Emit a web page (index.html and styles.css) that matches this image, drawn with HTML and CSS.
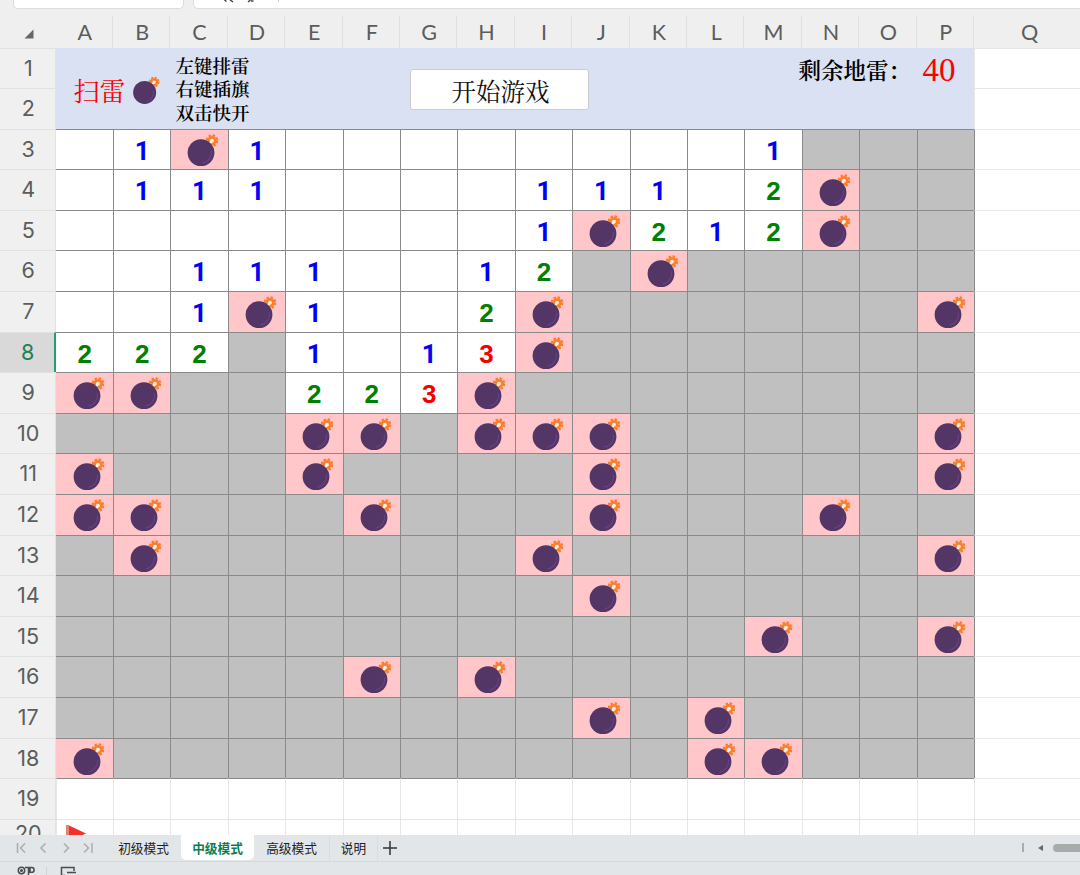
FILE: index.html
```html
<!DOCTYPE html>
<html lang="zh-CN">
<head>
    <meta charset="UTF-8">
    <meta name="viewport" content="width=device-width, initial-scale=1.0">
    <title>扫雷</title>
    <link rel="stylesheet" href="styles.css">
</head>
<body>
    <!-- Bomb symbol, shared by the banner and the board -->
    <svg class="symbols" aria-hidden="true">
        <symbol id="bomb" viewBox="0 0 57 40">
            <circle cx="42" cy="11.6" r="5.2" fill="none" stroke="#fb7c2e" stroke-width="2.2" stroke-dasharray="2.4 1.68"/>
            <circle cx="42" cy="11.6" r="3.3" fill="#fff0e6" stroke="#fb802e" stroke-width="2.8"/>
            <path d="M37.5 17L42 12" stroke="#fff0e0" stroke-width="2.6" stroke-linecap="round"/>
            <circle cx="31" cy="23.7" r="13.4" fill="#533566"/>
            <path d="M41.5 22A11 11 0 0 1 33 34" fill="none" stroke="#684080" stroke-width="1.3" stroke-linecap="round"/>
        </symbol>
    </svg>

    <div class="app">
        <!-- Formula bar -->
        <div class="formula-bar">
            <div class="name-box"></div>
            <div class="formula-box">
                <svg width="90" height="4" viewBox="0 0 90 4">
                    <path d="M30.5 0l2 1.5M36 0l3 2M54 2l2.5-2M57 1h2.5" fill="none" stroke="#444" stroke-width="1.5"/>
                    <path d="M84.5 0v2" stroke="#ccc"/>
                </svg>
            </div>
        </div>

        <!-- Column letters -->
        <div class="col-heads" id="col-heads">
            <div class="corner">
                <svg width="10" height="10" viewBox="0 0 10 10"><path d="M9.5 0.5V9.5H0.5Z" fill="#666"/></svg>
            </div>
        </div>

        <!-- Sheet -->
        <div class="sheet" id="sheet">
            <div class="row-head">1</div>
            <div class="banner">
                <div class="title">扫雷</div>
                <svg class="title-bomb" width="49" height="34.5"><use href="#bomb"/></svg>
                <div class="help">左键排雷<br>右键插旗<br>双击快开</div>
                <button class="start">开始游戏</button>
                <div class="remain">剩余地雷：</div>
                <div class="count">40</div>
            </div>
            <div class="blank"></div>
            <div class="row-head">2</div>
            <div class="blank"></div>
        </div>

        <!-- Sheet tabs -->
        <div class="tabs">
            <div class="tab-nav">
                <svg width="84" height="14" viewBox="0 0 84 14" fill="none" stroke="#a9adb0" stroke-width="1.5">
                    <path d="M4.5 2v10M12 2.5L7.5 7l4.5 4.5"/>
                    <path d="M32.5 2.5L28 7l4.5 4.5"/>
                    <path d="M51 2.5L55.5 7l-4.5 4.5"/>
                    <path d="M71 2.5L75.5 7l-4.5 4.5M79 2v10"/>
                </svg>
            </div>
            <div class="tab tab-first">初级模式</div>
            <div class="tab active">中级模式</div>
            <div class="tab tab-high">高级模式</div>
            <div class="tab tab-info">说明</div>
            <svg class="add" width="16" height="16" viewBox="0 0 16 16"><path d="M8 1v14M1 8h14" stroke="#333" stroke-width="1.5"/></svg>
            <div class="scroll">
                <span class="scroll-grip"></span>
                <svg width="5" height="6" viewBox="0 0 5 6"><path d="M5 0v6L0 3Z" fill="#666"/></svg>
                <span class="scroll-thumb"></span>
            </div>
        </div>

        <!-- Status bar -->
        <div class="status">
            <svg width="80" height="12" viewBox="0 0 80 12" fill="none" stroke="#4a4d50" stroke-width="1.5">
                <circle cx="11.5" cy="4.5" r="3.2"/>
                <circle cx="11.5" cy="4.5" r="0.8"/>
                <path d="M15 1.500h7.5M18.5 1.500v10M20 6.3V1.500h1.800q2.300 0 2.300 2.400t-2.300 2.400zM8 10h6"/>
                <path d="M36.5 1v11" stroke="#d0d3d5" stroke-width="1"/>
                <path d="M51.5 10V1.500h12.500V5M57 6.500h9M51 9.500h4"/>
            </svg>
        </div>
    </div>

    <script>
        // . open, # covered, * mine, digits are neighbour counts
        const board = [
            '.1*1........1###',
            '.111....111.2*##',
            '........1*212*##',
            '..111..12#*#####',
            '..1*1..2*######*',
            '222#1.13*#######',
            '**##223*########',
            '####**#***#####*',
            '*###*####*#####*',
            '**###*###*###*##',
            '#*######*######*',
            '#########*######',
            '############*##*',
            '#####*#*########',
            '#########*#*####',
            '*##########**###'
        ];
        const bomb = '<svg class="bomb"><use href="#bomb"/></svg>';
        const flag = '<svg class="flag" width="22" height="20" viewBox="0 0 22 20"><path d="M0 0h3v20H0z" fill="#e8836f"/><path d="M3 0.5L20 8.5L3 16Z" fill="#f4302c"/></svg>';

        const sheet = document.getElementById('sheet');
        const heads = document.getElementById('col-heads');

        function add(parent, className, html) {
            const el = document.createElement('div');
            el.className = className;
            el.innerHTML = html || '';
            parent.appendChild(el);
        }

        for (const letter of 'ABCDEFGHIJKLMNOPQ') {
            add(heads, 'col-head', letter);
        }

        board.forEach((line, i) => {
            const row = i + 3;
            add(sheet, row === 8 ? 'row-head selected' : 'row-head', row);
            for (const ch of line) {
                if (ch === '*') add(sheet, 'cell mine', bomb);
                else if (ch === '#') add(sheet, 'cell covered');
                else if (ch === '.') add(sheet, 'cell');
                else add(sheet, 'cell n' + ch, ch);
            }
            add(sheet, 'blank edge');
        });

        // Empty rows under the board
        for (const row of [19, 20]) {
            add(sheet, row === 20 ? 'row-head last' : 'row-head', row);
            for (let c = 0; c < 17; c++) {
                const under = row === 19 && c < 16;
                add(sheet, under ? 'blank under' : 'blank', row === 20 && c === 0 ? flag : '');
            }
        }
    </script>
</body>
</html>
```
FILE: styles.css
```css
* {
    box-sizing: border-box;
}

body {
    margin: 0;
    background: #fff;
    font-family: "Noto Sans CJK SC", sans-serif;
    color: #222;
    overflow: hidden;
}

.symbols {
    display: none;
}

.app {
    display: flex;
    flex-direction: column;
    width: 1080px;
    height: 875px;
    overflow: hidden;
}

/* Formula bar */
.formula-bar {
    display: flex;
    gap: 9px;
    flex: none;
    height: 15.5px;
    padding-left: 13px;
    background: #efefef;
}

.name-box,
.formula-box {
    height: 9px;
    background: #fff;
    border: 1px solid #dcdcdc;
    border-top: none;
    border-radius: 0 0 5px 5px;
}

.name-box {
    width: 171px;
}

.formula-box {
    flex: 1;
    border-right: none;
    border-radius: 0 0 0 5px;
}

.formula-box svg {
    display: block;
}

/* Column and row headers */
.col-heads,
.sheet {
    display: grid;
    grid-template-columns: 55.5px repeat(16, 57.42px) 110px;
}

.col-heads {
    flex: none;
    height: 32px;
    background: #efefef;
}

.corner {
    padding: 13px 0 0 24px;
}

.corner svg {
    display: block;
}

.col-head {
    padding-left: 2px;
    border-right: 1px solid #e0e0e0;
    font: 21.5px/33px Lato, sans-serif;
    color: #5a5d5c;
    text-align: center;
}

.row-head {
    padding-left: 2px;
    background: #f0f0f0;
    border-top: 1px solid #e2e2e2;
    border-right: 1px solid #e2e2e2;
    font: 21.5px/38px Inter, sans-serif;
    color: #5a5d5c;
    text-align: center;
}

.row-head.selected {
    background: #d9d9d9;
    border-right: 2px solid #1fa06c;
    color: #217f56;
}

.row-head.last {
    line-height: 26px;
}

/* Sheet */
.sheet {
    flex: none;
    height: 787.5px;
    grid-auto-rows: 40.6px;
    overflow: hidden;
}

.cell {
    border-top: 1px solid #8a8a8a;
    border-left: 1px solid #8a8a8a;
    background: #fff;
    font: bold 26px/42px "Liberation Sans", sans-serif;
    text-align: center;
}

.row-head + .cell {
    border-left: none;
    padding-left: 1px;
}

.covered {
    background: #c0c0c0;
}

.mine {
    background: #ffc7ca;
}

.bomb {
    display: block;
    width: 57px;
    height: 40px;
    margin: -1px 0 0 -1px;
}

.n1 {
    color: #0000f5;
    font-family: Roboto, sans-serif;
}

.n2 {
    color: #008000;
}

.n3 {
    color: #f50000;
}

.blank {
    border-top: 1px solid #e6e6e6;
    border-left: 1px solid #e6e6e6;
    background: #fff;
}

.edge {
    border-left-color: #8a8a8a;
}

.under {
    border-top-color: #8a8a8a;
}

.flag {
    display: block;
    margin: 5px 0 0 9px;
}

.banner {
    grid-column: span 16;
    grid-row: span 2;
    display: flex;
    align-items: flex-start;
    background: #d9e1f2;
    color: #000;
    font-family: "Noto Serif CJK SC", "Noto Sans CJK SC", serif;
    white-space: nowrap;
}

.title {
    width: 54px;
    margin: 27px 0 0 18px;
    font-size: 26px;
    line-height: 30px;
    color: #fa0000;
}

.title-bomb {
    margin: 24px 0 0 -10px;
}

.help {
    width: 76px;
    margin: 6px 0 0 9px;
    font-size: 18.5px;
    font-weight: 600;
    line-height: 23.5px;
}

.start {
    width: 179px;
    height: 41px;
    margin: 21px 0 0 158px;
    padding: 3px 0 0 3px;
    background: #fff;
    border: 1px solid #cdcdcd;
    border-radius: 3px;
    font-family: inherit;
    font-size: 24.5px;
    line-height: 36px;
    color: #111;
}

.remain {
    width: 124px;
    margin: 5px 0 0 210px;
    font-size: 22.5px;
    font-weight: 600;
    line-height: 32px;
}

.count {
    font: 33px/38px "Liberation Serif", serif;
    color: #f00;
    margin-top: 3px;
}

/* Sheet tabs */
.tabs {
    display: flex;
    flex: none;
    height: 27px;
    background: #e3e6e8;
    border-bottom: 1px solid #d6d9db;
    font-size: 12.7px;
    line-height: 26px;
    white-space: nowrap;
}

.tab-nav {
    width: 106px;
    padding: 6px 0 0 13px;
}

.tab-nav svg {
    display: block;
}

.tab {
    text-align: center;
}

.tab-first {
    width: 75px;
}

.active {
    width: 73px;
    height: 25px;
    background: #fff;
    border-radius: 0 0 5px 5px;
    color: #0e7e51;
    font-weight: bold;
}

.tab-high {
    width: 76px;
    border-right: 1px solid #d9dcde;
}

.tab-info {
    width: 48px;
    border-right: 1px solid #d9dcde;
}

.add {
    margin: 5px 0 0 4px;
}

.scroll {
    display: flex;
    align-items: center;
    margin-left: auto;
    height: 25px;
}

.scroll-grip {
    width: 2px;
    height: 9px;
    margin-right: 14px;
    background: #a9adb0;
}

.scroll-thumb {
    width: 27px;
    height: 8px;
    margin-left: 10px;
    background: #a7abab;
    border-radius: 4px 0 0 4px;
}

.status {
    flex: 1;
    padding: 4px 0 0 10px;
    background: #e3e6e9;
}

.status svg {
    display: block;
}
```
